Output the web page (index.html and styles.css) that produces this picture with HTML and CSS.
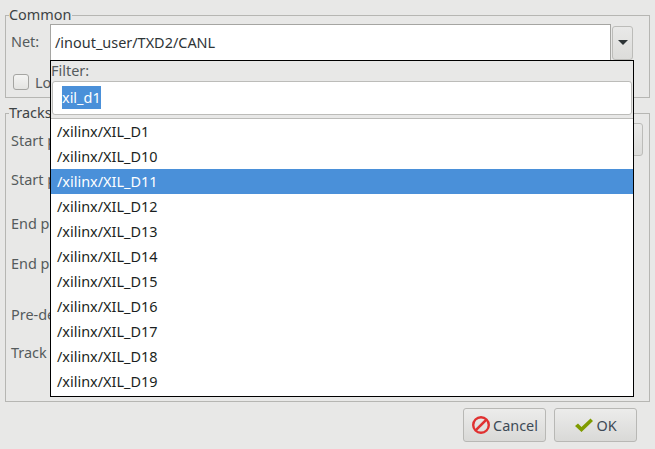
FILE: index.html
```html
<html lang="en">
<head>
    <meta charset="UTF-8">
    <title>Track &amp; Via Properties</title>
    <link rel="stylesheet" href="styles.css">
</head>
<body>
    <div class="dialog">
        <fieldset class="frame common">
            <legend>Common</legend>
            <div class="net-row">
                <span class="label net-label">Net:</span>
                <div class="entry net-entry">/inout_user/TXD2/CANL</div>
                <button class="arrow-btn"><span class="arrow"></span></button>
            </div>
            <div class="lock-row">
                <span class="check"></span>
                <span class="label">Locked</span>
            </div>
        </fieldset>

        <fieldset class="frame tracks">
            <legend>Tracks</legend>
            <div class="row row-first">
                <span class="label label-low">Start point X</span>
                <button class="stub-btn"></button>
            </div>
            <div class="row row-d"><span class="label">Start point Y</span></div>
            <div class="row row-b"><span class="label">End point X</span></div>
            <div class="row row-a"><span class="label">End point Y</span></div>
            <div class="row row-c"><span class="label">Pre-defined sizes</span></div>
            <div class="row row-e"><span class="label">Track width</span></div>
        </fieldset>

        <div class="actions">
            <button class="btn">
                <svg width="20" height="20" viewBox="0 0 20 20">
                    <circle cx="10" cy="10" r="7.8" fill="none" stroke="#e03131" stroke-width="2.4"/>
                    <path d="M4.6 15.4 15.4 4.6" stroke="#e03131" stroke-width="2.6"/>
                </svg>
                Cancel
            </button>
            <button class="btn">
                <svg width="20" height="16" viewBox="0 0 20 16">
                    <path d="M1 9 4 6.5 7.5 10 16.5 1.5 19 4 7.5 15Z" fill="#7f9b00"/>
                </svg>
                OK
            </button>
        </div>

        <!-- Net selector popup, open over the dialog -->
        <div class="popup">
            <div class="filter-label">Filter:</div>
            <div class="entry filter-entry"><span class="selected">xil_d1</span></div>
            <ul class="net-list">
                <li>/xilinx/XIL_D1</li>
                <li>/xilinx/XIL_D10</li>
                <li class="active">/xilinx/XIL_D11</li>
                <li>/xilinx/XIL_D12</li>
                <li>/xilinx/XIL_D13</li>
                <li>/xilinx/XIL_D14</li>
                <li>/xilinx/XIL_D15</li>
                <li>/xilinx/XIL_D16</li>
                <li>/xilinx/XIL_D17</li>
                <li>/xilinx/XIL_D18</li>
                <li>/xilinx/XIL_D19</li>
            </ul>
        </div>
    </div>
</body>
</html>
```

FILE: styles.css
```css
* {
    box-sizing: border-box;
}

body {
    margin: 0;
    font-family: "Noto Sans", sans-serif;
    font-size: 14.45px;
    color: #2e3436;
    background-color: #e8e8e7;
    overflow: hidden;
}

.dialog {
    position: relative;
    width: 655px;
    height: 449px;
    padding: 6px 5px 0 5px;
}

.frame {
    margin: 0;
    padding: 0;
    border: 1px solid #b6b6b3;
    min-width: 0;
}

.frame legend {
    margin-left: 3px;
    padding: 0;
    height: 19px;
    line-height: 17px;
    color: #3d4345;
}

.common {
    height: 92px;
}

.tracks {
    height: 298px;
    margin-top: 6px;
}

.label {
    color: #555b5c;
    white-space: nowrap;
}

.label-low {
    padding-top: 2px;
}

.net-row {
    display: flex;
    align-items: center;
    height: 37px;
    margin-top: -1px;
}

.net-label {
    width: 44px;
    padding-left: 5px;
    padding-bottom: 2px;
}

.entry {
    background-color: #ffffff;
    color: #2e3436;
}

.net-entry {
    width: 561px;
    height: 37px;
    line-height: 35px;
    padding-left: 4px;
    border: 1px solid #a5a5a2;
}

.arrow-btn {
    display: flex;
    align-items: center;
    justify-content: center;
    width: 21px;
    height: 34px;
    margin-left: 1px;
    padding: 0;
    border: 1px solid #bcbcb9;
    border-radius: 3px;
    background: linear-gradient(#e9e9e8, #dcdcda);
}

.arrow {
    width: 0;
    height: 0;
    border-left: 5px solid transparent;
    border-right: 5px solid transparent;
    border-top: 5px solid #2e3436;
}

.lock-row {
    display: flex;
    align-items: center;
    gap: 6px;
    height: 20px;
    margin-top: 11px;
    padding-left: 7px;
}

.check {
    width: 16px;
    height: 16px;
    border: 1px solid #a5a5a2;
    border-radius: 3px;
    background: linear-gradient(#f4f4f3, #e4e4e2);
}

.row {
    display: flex;
    align-items: center;
    justify-content: space-between;
    padding-left: 5px;
    padding-right: 6px;
    height: 20px;
}

.row-first {
    height: 33px;
}

.row-a {
    margin-top: 20px;
}

.row-b {
    margin-top: 24px;
}

.row-c {
    margin-top: 31px;
}

.row-d {
    margin-top: 13px;
}

.row-e {
    margin-top: 18px;
}

.stub-btn {
    width: 80px;
    height: 33px;
    padding: 0;
    border: 1px solid #bcbcb9;
    border-radius: 3px;
    background: linear-gradient(#e9e9e8, #dcdcda);
}

.actions {
    display: flex;
    justify-content: flex-end;
    gap: 8px;
    margin-top: 6px;
    padding-right: 13px;
}

.btn {
    display: flex;
    align-items: center;
    justify-content: center;
    gap: 2px;
    width: 83px;
    height: 34px;
    padding: 0;
    border: 1px solid #b8b8b5;
    border-radius: 3px;
    background: linear-gradient(#ececeb, #d9d9d7);
    color: #3d4a56;
    font-family: inherit;
    font-size: 14.45px;
}

.popup {
    position: absolute;
    left: 50px;
    top: 60px;
    width: 584px;
    height: 337px;
    border: 1px solid #000000;
    background-color: #e8e8e7;
}

.filter-label {
    height: 20px;
    line-height: 19px;
    color: #555b5c;
}

.filter-entry {
    height: 34px;
    margin-left: 1px;
    margin-right: 1px;
    padding-left: 9px;
    line-height: 31px;
    border: 1px solid #bcbcb9;
    border-radius: 3px;
}

.selected {
    background-color: #4a90d9;
    color: #ffffff;
    padding: 2px 0;
}

.net-list {
    list-style: none;
    margin: 3px 0 0 0;
    padding: 0;
    border-top: 1px solid #bcbcb9;
    background-color: #ffffff;
    height: 278px;
}

.net-list li {
    height: 25px;
    line-height: 25px;
    padding-left: 6px;
    color: #1a1f21;
}

.net-list li.active {
    background-color: #4a90d9;
    color: #ffffff;
}
```
